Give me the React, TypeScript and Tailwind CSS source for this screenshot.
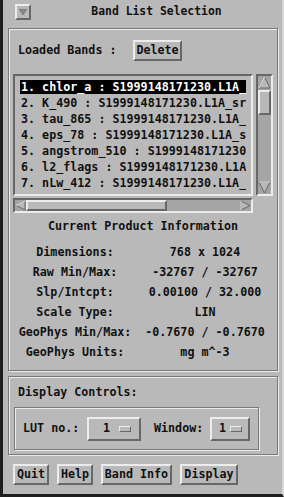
import React from 'react';

const raised =
  'border-2 border-t-[#ececec] border-l-[#ececec] border-b-[#676767] border-r-[#676767]';
const raisedThin =
  'border border-t-[#ececec] border-l-[#ececec] border-b-[#676767] border-r-[#676767]';
const sunken =
  'border-2 border-t-[#676767] border-l-[#676767] border-b-[#ececec] border-r-[#ececec]';
const etched = 'border border-[#7a7a7a] shadow-[inset_1px_1px_0_#ececec,1px_1px_0_#ececec]';

const bands = [
  '1. chlor_a : S1999148171230.L1A_srf',
  '2. K_490 : S1999148171230.L1A_srf',
  '3. tau_865 : S1999148171230.L1A_srf',
  '4. eps_78 : S1999148171230.L1A_srf',
  '5. angstrom_510 : S1999148171230.L1A_srf',
  '6. l2_flags : S1999148171230.L1A_srf',
  '7. nLw_412 : S1999148171230.L1A_srf',
];

const info: [string, string][] = [
  ['Dimensions:', '768 x 1024'],
  ['Raw Min/Max:', '-32767 / -32767'],
  ['Slp/Intcpt:', '0.00100 / 32.000'],
  ['Scale Type:', 'LIN'],
  ['GeoPhys Min/Max:', '-0.7670 / -0.7670'],
  ['GeoPhys Units:', 'mg m^-3'],
];

type Dir = 'up' | 'down' | 'left' | 'right';

function Arrow({ dir, size }: { dir: Dir; size: number }) {
  const s = size;
  const pts: Record<Dir, string> = {
    up: `${s / 2},1 ${s - 1},${s - 1} 1,${s - 1}`,
    down: `1,1 ${s - 1},1 ${s / 2},${s - 1}`,
    left: `1,${s / 2} ${s - 1},1 ${s - 1},${s - 1}`,
    right: `1,1 ${s - 1},${s / 2} 1,${s - 1}`,
  };
  return (
    <svg width={s} height={s} viewBox={`0 0 ${s} ${s}`} className="shrink-0 block">
      <polygon points={pts[dir]} fill="#b9b9b9" stroke="#676767" strokeWidth="1" />
      {dir === 'up' && <line x1={s / 2} y1={1} x2={1} y2={s - 1} stroke="#ececec" />}
      {dir === 'down' && <line x1={1} y1={1} x2={s - 1} y2={1} stroke="#ececec" />}
      {dir === 'left' && <line x1={1} y1={s / 2} x2={s - 1} y2={1} stroke="#ececec" />}
      {dir === 'right' && <line x1={1} y1={1} x2={1} y2={s - 1} stroke="#ececec" />}
    </svg>
  );
}

function PushButton({ label, w }: { label: string; w: string }) {
  return (
    <div className={`${raised} ${w} h-[21px] flex items-center justify-center leading-none`}>
      {label}
    </div>
  );
}

function OptionMenu({ w, textMl, barMr }: { w: string; textMl: string; barMr: string }) {
  return (
    <div className={`${raised} ${w} h-[24px] flex items-center`}>
      <span className={textMl}>1</span>
      <span className={`${raisedThin} ml-auto ${barMr} w-[12px] h-[6px] bg-[#b9b9b9]`} />
    </div>
  );
}

export default function App() {
  return (
    <div className="w-[284px] h-[497px] bg-[#b9b9b9] relative overflow-hidden text-[#111] font-bold text-[11.7px] [font-family:'DejaVu_Sans_Mono','Liberation_Mono',monospace] border-l-[3px] border-l-[#1e1e1e] border-b-[3px] border-b-[#1e1e1e] border-r-2 border-r-[#d6d6d6]">
      {/* title bar */}
      <div className="h-[24px] flex items-center">
        <div className={`${raised} ml-[12px] w-[16px] h-[16px] flex items-center justify-center`}>
          <svg width="8" height="6" viewBox="0 0 8 6">
            <polygon points="0,0 8,0 4,6" fill="#8a8a8a" stroke="#676767" strokeWidth="0.6" />
          </svg>
        </div>
        <div className="flex-1 text-center text-[11.4px] leading-none">Band List Selection</div>
      </div>

      {/* band list frame */}
      <div className={`${etched} ml-[5px] mt-[4px] w-[270px] h-[343px]`}>
        <div className="mt-[11px] pl-[9px] flex items-center h-[21px]">
          <span className="w-[115px] shrink-0">Loaded Bands :</span>
          <PushButton label="Delete" w="w-[49px]" />
        </div>

        <div className="mt-[13px] ml-[4px] flex gap-[3px]">
          <div className="flex flex-col gap-[2px]">
            <div className={`${sunken} w-[240px] h-[122px] px-[5px] pt-[4px] overflow-hidden`}>
              {bands.map((b, i) => (
                <div
                  key={b}
                  className={`h-[14px] leading-[14px] mb-[2px] whitespace-nowrap overflow-hidden pl-[1px] ${
                    i === 0 ? 'bg-black text-white' : ''
                  }`}
                >
                  {b}
                </div>
              ))}
            </div>
            <div className={`${sunken} w-[240px] h-[15px] bg-[#a5a5a5] flex`}>
              <Arrow dir="left" size={11} />
              <div className={`${raised} w-[141px] h-[11px] bg-[#b9b9b9]`} />
              <div className="flex-1" />
              <Arrow dir="right" size={11} />
            </div>
          </div>
          <div className={`${sunken} w-[17px] h-[122px] bg-[#a5a5a5] flex flex-col`}>
            <Arrow dir="up" size={13} />
            <div className={`${raised} mt-[1px] w-[13px] h-[25px] bg-[#b9b9b9]`} />
            <div className="flex-1" />
            <Arrow dir="down" size={13} />
          </div>
        </div>

        <div className="mt-[6px] h-[14px] leading-[14px] text-center">Current Product Information</div>

        <div className="mt-[9px] grid grid-cols-[132px_128px]">
          {info.map(([k, v]) => (
            <React.Fragment key={k}>
              <div className="h-[20px] leading-[20px] text-center whitespace-nowrap">{k}</div>
              <div className="h-[20px] leading-[20px] text-center whitespace-nowrap">{v}</div>
            </React.Fragment>
          ))}
        </div>
      </div>

      {/* display controls frame */}
      <div className={`${etched} ml-[5px] mt-[5px] w-[270px] h-[79px]`}>
        <div className="pt-[8px] pl-[9px] h-[22px] leading-[14px]">Display Controls:</div>
        <div className={`${etched} mt-[8px] ml-[5px] w-[245px] h-[43px] flex items-center pl-[8px]`}>
          <span className="w-[64px] shrink-0">LUT no.:</span>
          <OptionMenu w="w-[54px]" textMl="ml-[14px]" barMr="mr-[8px]" />
          <span className="ml-[13px] w-[56px] shrink-0">Window:</span>
          <OptionMenu w="w-[40px]" textMl="ml-[7px]" barMr="mr-[6px]" />
        </div>
      </div>

      {/* action buttons */}
      <div className="mt-[9px] ml-[10px] flex gap-[8px]">
        <PushButton label="Quit" w="w-[36px]" />
        <PushButton label="Help" w="w-[36px]" />
        <PushButton label="Band Info" w="w-[71px]" />
        <PushButton label="Display" w="w-[58px]" />
      </div>
    </div>
  );
}
